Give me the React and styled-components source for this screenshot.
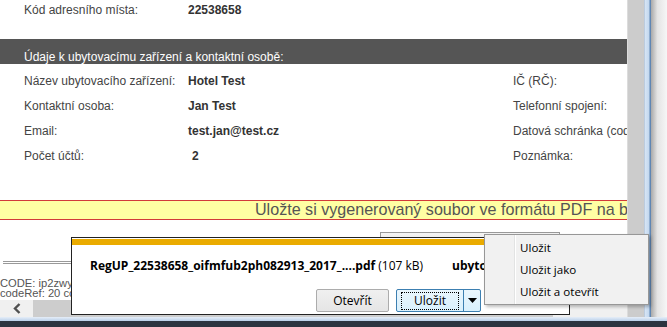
import React from 'react'
import styled, { createGlobalStyle } from 'styled-components'

const GlobalStyle = createGlobalStyle`
  html, body { margin: 0; padding: 0; overflow: hidden; background: #fff; }
`

const uiFont = `"Open Sans", "Noto Sans", sans-serif`
const pageFont = `"Liberation Sans", Arial, sans-serif`

const Screen = styled.div`
  position: relative;
  width: 667px;
  height: 327px;
  overflow: hidden;
  display: flex;
  flex-direction: column;
  background: #fff;
`

const MainRow = styled.div`
  display: flex;
  height: 317px;
`

const Viewport = styled.div`
  width: 627px;
  display: flex;
  flex-direction: column;
  overflow: hidden;
`

const Page = styled.div`
  flex: 1;
  width: 900px;
  overflow: hidden;
  font-family: ${pageFont};
  font-size: 12px;
  color: #444;
`

const Row = styled.div`
  display: grid;
  grid-template-columns: 164px 325px auto;
  padding-left: 24px;
  align-items: center;
  height: ${p => p.$h || 25}px;
`

const Label = styled.div`
  white-space: nowrap;
`

const Value = styled.div`
  font-weight: bold;
  color: #333;
  padding-left: ${p => p.$indent || 0}px;
  white-space: nowrap;
`

const SectionBar = styled.div`
  margin-top: 19px;
  height: 25px;
  width: 627px;
  background: #555;
  color: #fff;
  padding: 11px 0 0 24px;
  box-sizing: border-box;
  margin-bottom: 4px;
`

const Notice = styled.div`
  margin-top: 32px;
  height: 20px;
  box-sizing: border-box;
  background: #ffffa3;
  border-top: 1px solid #d23a3a;
  border-bottom: 1px solid #d23a3a;
  padding-left: 255px;
  font-size: 16.1px;
  line-height: 17px;
  color: #555;
  white-space: nowrap;
`

const ActionRow = styled.div`
  display: flex;
  padding: 12px 0 0 380px;
`

const PageButton = styled.div`
  width: 180px;
  height: 24px;
  box-sizing: border-box;
  border: 1px solid #999;
  background: linear-gradient(#f4f4f4, #dcdcdc);
  font-weight: bold;
  font-size: 13px;
  color: #222;
  padding: 1px 0 0 20px;
`

const Rule = styled.div`
  margin: 5px 0 0 3px;
  width: 560px;
  height: 1px;
  border-top: 1px solid #999;
  border-bottom: 1px solid #999;
`

const CodeLines = styled.div`
  margin-top: 14px;
  font-size: 11.2px;
  line-height: 10px;
  color: #555;
  white-space: nowrap;
`

const HScroll = styled.div`
  height: 17px;
  background: #f0f0f0;
  display: flex;
  align-items: center;
`

const Arrow = styled.div`
  width: 33px;
  display: flex;
  align-items: center;
  justify-content: center;
`

const Thumb = styled.div`
  width: 520px;
  height: 17px;
  background: #cdcdcd;
`

const VScroll = styled.div`
  width: 16px;
  background: #cccccc;
  border-left: 1px solid #dcdcdc;
`

const FrameEdge = styled.div`
  width: 7px;
  background: linear-gradient(90deg, #9fb2c8 0, #d7e5f5 1px, #c3d8ef 5px, #5f86b3 6px);
`

const Desktop = styled.div`
  flex: 1;
  background: linear-gradient(90deg, #a9a9a9, #e4e4e4 40%, #f6f6f6);
`

const BottomFrame = styled.div`
  height: 4px;
  background: linear-gradient(#e6eef8, #b9cfe9);
`

const Taskbar = styled.div`
  flex: 1;
  background: #2c3440;
`

const DownloadBar = styled.div`
  position: absolute;
  left: 71px;
  top: 237px;
  width: 499px;
  height: 78px;
  box-sizing: border-box;
  border: 1px solid #222;
  background: #fff;
  font-family: ${uiFont};
  font-size: 12px;
  color: #000;
  display: flex;
  flex-direction: column;
`

const Stripe = styled.div`
  margin-top: 1px;
  height: 6px;
  background: #eaab00;
`

const FileLine = styled.div`
  display: flex;
  padding: 12px 0 0 18px;
  white-space: nowrap;
  height: 18px;
  line-height: 18px;
`

const FileName = styled.span`
  font-weight: bold;
  width: 362px;
  span { font-weight: normal; }
`

const Strong = styled.span`
  font-weight: bold;
`

const Buttons = styled.div`
  display: flex;
  gap: 7px;
  padding: 14px 0 0 244px;
`

const Btn = styled.div`
  width: 73px;
  height: 23px;
  box-sizing: border-box;
  border: 1px solid #acacac;
  border-radius: 2px;
  background: linear-gradient(#f0f0f0, #e5e5e5);
  display: flex;
  align-items: center;
  justify-content: center;
`

const Split = styled.div`
  width: 85px;
  height: 23px;
  box-sizing: border-box;
  border: 1px solid #3c7fb1;
  border-radius: 2px;
  background: linear-gradient(#eaf6fd, #d9f0fc);
  display: flex;
`

const SplitMain = styled.div`
  width: 66px;
  border-right: 1px solid #3c7fb1;
  display: flex;
  align-items: center;
  justify-content: center;
  span {
    border: 1px dotted #000;
    padding: 0 12px;
    line-height: 16px;
  }
`

const SplitArrow = styled.div`
  flex: 1;
  display: flex;
  align-items: center;
  justify-content: center;
`

const Menu = styled.div`
  position: absolute;
  left: 484px;
  top: 234px;
  width: 165px;
  height: 71px;
  box-sizing: border-box;
  border: 1px solid #979797;
  background: linear-gradient(90deg, #f1f1f1 29px, #e2e3e3 29px, #e2e3e3 30px, #fff 30px, #fff 31px, #f1f1f1 31px);
  box-shadow: 2px 2px 3px rgba(0, 0, 0, 0.25);
  padding-top: 2px;
  font-family: ${uiFont};
  font-size: 11.6px;
  color: #000;
`

const MenuItem = styled.div`
  height: 22px;
  line-height: 22px;
  padding-left: 35px;
`

const Caret = () => (
  <svg width="9" height="5" viewBox="0 0 9 5">
    <path d="M0 0h9L4.5 5z" fill="#000" />
  </svg>
)

const Chevron = () => (
  <svg width="8" height="11" viewBox="0 0 8 11">
    <path d="M6.5 1L2 5.5 6.5 10" fill="none" stroke="#505050" strokeWidth="2.4" />
  </svg>
)

export default function App() {
  return (
    <Screen>
      <GlobalStyle />
      <MainRow>
        <Viewport>
          <Page>
            <Row $h={20}>
              <Label>Kód adresního místa:</Label>
              <Value>22538658</Value>
            </Row>
            <SectionBar>Údaje k ubytovacímu zařízení a kontaktní osobě:</SectionBar>
            <Row>
              <Label>Název ubytovacího zařízení:</Label>
              <Value>Hotel Test</Value>
              <Label>IČ (RČ):</Label>
            </Row>
            <Row>
              <Label>Kontaktní osoba:</Label>
              <Value>Jan Test</Value>
              <Label>Telefonní spojení:</Label>
            </Row>
            <Row>
              <Label>Email:</Label>
              <Value>test.jan@test.cz</Value>
              <Label>Datová schránka (code):</Label>
            </Row>
            <Row>
              <Label>Počet účtů:</Label>
              <Value $indent={4}>2</Value>
              <Label>Poznámka:</Label>
            </Row>
            <Notice>Uložte si vygenerovaný soubor ve formátu PDF na bezpečné místo.</Notice>
            <ActionRow>
              <PageButton>Pokračovat</PageButton>
            </ActionRow>
            <Rule />
            <CodeLines>
              <div>CODE: ip2zwy s</div>
              <div>codeRef: 20 coc</div>
            </CodeLines>
          </Page>
          <HScroll>
            <Arrow><Chevron /></Arrow>
            <Thumb />
          </HScroll>
        </Viewport>
        <VScroll />
        <FrameEdge />
        <Desktop />
      </MainRow>
      <BottomFrame />
      <Taskbar />

      <DownloadBar>
        <Stripe />
        <FileLine>
          <FileName>
            RegUP_22538658_oifmfub2ph082913_2017_....pdf <span>(107 kB)</span>
          </FileName>
          <Strong>ubytovani.cz</Strong>
        </FileLine>
        <Buttons>
          <Btn>Otevřít</Btn>
          <Split>
            <SplitMain><span>Uložit</span></SplitMain>
            <SplitArrow><Caret /></SplitArrow>
          </Split>
        </Buttons>
      </DownloadBar>

      <Menu>
        <MenuItem>Uložit</MenuItem>
        <MenuItem>Uložit jako</MenuItem>
        <MenuItem>Uložit a otevřít</MenuItem>
      </Menu>
    </Screen>
  )
}
